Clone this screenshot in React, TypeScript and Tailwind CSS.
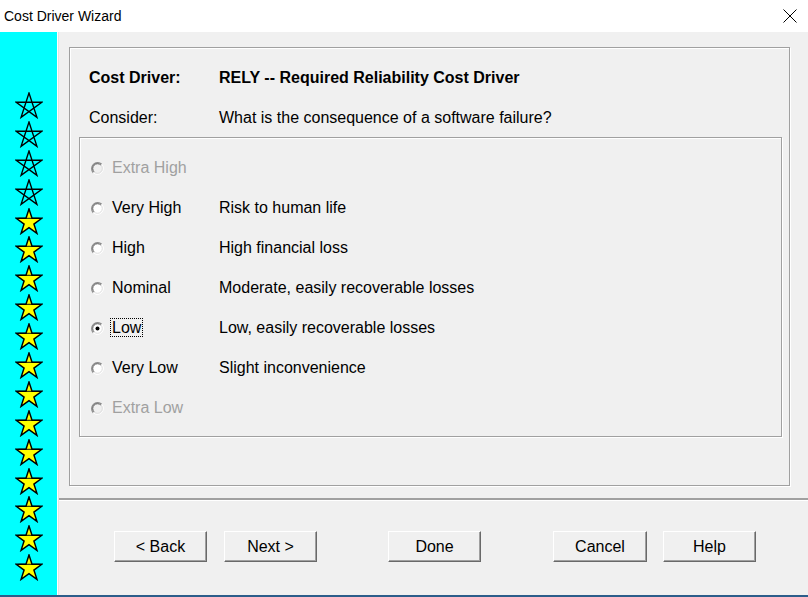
import type { ReactNode } from 'react'

const font = { fontFamily: '"Liberation Sans", Arial, sans-serif' }

const ratings = [
  { name: 'Extra High', desc: '', disabled: true },
  { name: 'Very High', desc: 'Risk to human life' },
  { name: 'High', desc: 'High financial loss' },
  { name: 'Nominal', desc: 'Moderate, easily recoverable losses' },
  { name: 'Low', desc: 'Low, easily recoverable losses', checked: true },
  { name: 'Very Low', desc: 'Slight inconvenience' },
  { name: 'Extra Low', desc: '', disabled: true },
]

// star points for a 28x28 box
const OUTER = '14,1 17.14,10.67 27.31,10.67 19.09,16.65 22.23,26.33 14,20.35 5.77,26.33 8.91,16.65 0.69,10.67 10.86,10.67'

function Star({ filled }: { filled: boolean }) {
  if (!filled) {
    return (
      <svg width="28" height="27" viewBox="0 0 28 28">
        <path
          d="M14 1 L22.23 26.33 L0.69 10.67 L27.31 10.67 L5.77 26.33 Z"
          fill="none"
          stroke="#000"
          strokeWidth="1.4"
        />
      </svg>
    )
  }
  return (
    <svg width="28" height="27" viewBox="0 0 28 28">
      <polygon points={OUTER} fill="#ffff00" stroke="#000" strokeWidth="1.5" />
      <line x1="3" y1="10.67" x2="25" y2="10.67" stroke="#000" strokeWidth="1" />
    </svg>
  )
}

function Radio({ checked, disabled }: { checked?: boolean; disabled?: boolean }) {
  return (
    <svg width="13" height="13" viewBox="0 0 13 13" className="shrink-0">
      <circle cx="6.5" cy="6.5" r="6" fill={disabled ? '#f0f0f0' : '#fff'} />
      <path d="M10.74 2.26 A6 6 0 0 0 2.26 10.74" fill="none" stroke="#8a8a8a" strokeWidth="1.2" />
      <path d="M2.26 10.74 A6 6 0 0 0 10.74 2.26" fill="none" stroke="#fff" strokeWidth="1" />
      <path d="M9.9 3.1 A4.8 4.8 0 0 0 3.1 9.9" fill="none" stroke="#5a5a5a" strokeWidth="1" />
      <path d="M3.1 9.9 A4.8 4.8 0 0 0 9.9 3.1" fill="none" stroke="#dcdcdc" strokeWidth="1" />
      {checked && <circle cx="6.5" cy="6.5" r="2" fill="#000" />}
    </svg>
  )
}

function Btn({ children, className = '' }: { children: ReactNode; className?: string }) {
  return (
    <button
      className={`h-[31px] w-[93px] border border-t-white border-l-white border-r-[#696969] border-b-[#696969] bg-[#f0f0f0] text-[16px] text-black shadow-[inset_-1px_-1px_0_#a0a0a0] ${className}`}
      style={font}
    >
      {children}
    </button>
  )
}

export default function App() {
  return (
    <div className="flex h-[597px] w-[808px] flex-col overflow-hidden bg-[#f0f0f0]" style={font}>
      {/* title bar */}
      <div className="flex h-8 shrink-0 items-center justify-between bg-white pl-1 pr-[11px]">
        <span className="text-[14px] text-black">Cost Driver Wizard</span>
        <svg width="14" height="14" viewBox="0 0 14 14">
          <path d="M0.5 0.5 L13.5 13.5 M13.5 0.5 L0.5 13.5" stroke="#000" strokeWidth="1" />
        </svg>
      </div>

      <div className="flex flex-1">
        {/* star strip */}
        <div className="flex w-[57px] shrink-0 flex-col gap-[1.9px] bg-[#00ffff] pl-[15px] pt-[60px]">
          {Array.from({ length: 17 }, (_, i) => (
            <Star key={i} filled={i >= 4} />
          ))}
        </div>
        <div className="w-[2px] shrink-0 border-l border-white bg-[#e3e3e3]" />

        <div className="flex flex-1 flex-col">
          {/* outer group */}
          <div className="ml-[10px] mr-[18px] mt-[15px] h-[439px] border border-[#a0a0a0] shadow-[inset_1px_1px_0_#fff,1px_1px_0_#fff]">
            <div className="pl-[19px] pt-[10px]">
              <div className="flex h-10 items-center text-[16px] font-bold text-black">
                <span className="w-[130px]">Cost Driver:</span>
                <span>RELY -- Required Reliability Cost Driver</span>
              </div>
              <div className="flex h-[39px] items-center text-[16px] text-black">
                <span className="w-[130px]">Consider:</span>
                <span>What is the consequence of a software failure?</span>
              </div>
            </div>

            <div className="ml-[9px] mr-[7px] border border-[#a0a0a0] pb-[8px] pt-[10px] shadow-[inset_1px_1px_0_#fff,1px_1px_0_#fff]">
              {ratings.map((r) => (
                <div key={r.name} className="flex h-10 items-center pl-[11px] text-[16px]">
                  <Radio checked={r.checked} disabled={r.disabled} />
                  <div className="w-[115px] pl-[6px]">
                    <span
                      className={`px-[1px] ${r.disabled ? 'text-[#a0a0a0]' : 'text-black'} ${
                        r.checked ? 'border border-dotted border-black' : 'border border-transparent'
                      }`}
                    >
                      {r.name}
                    </span>
                  </div>
                  <span className="text-black">{r.desc}</span>
                </div>
              ))}
            </div>
          </div>

          {/* separator */}
          <div className="mt-[12px] h-[3px] border-b border-white bg-[#a0a0a0]" />

          {/* buttons */}
          <div className="mt-[30px] flex pl-[55px]">
            <Btn>&lt; Back</Btn>
            <Btn className="ml-[17px]">Next &gt;</Btn>
            <Btn className="ml-[71px]">Done</Btn>
            <Btn className="ml-[72px] w-[94px]">Cancel</Btn>
            <Btn className="ml-[16px]">Help</Btn>
          </div>
        </div>
      </div>

      <div className="h-[2px] shrink-0 bg-[#2c5d8a]" />
    </div>
  )
}
